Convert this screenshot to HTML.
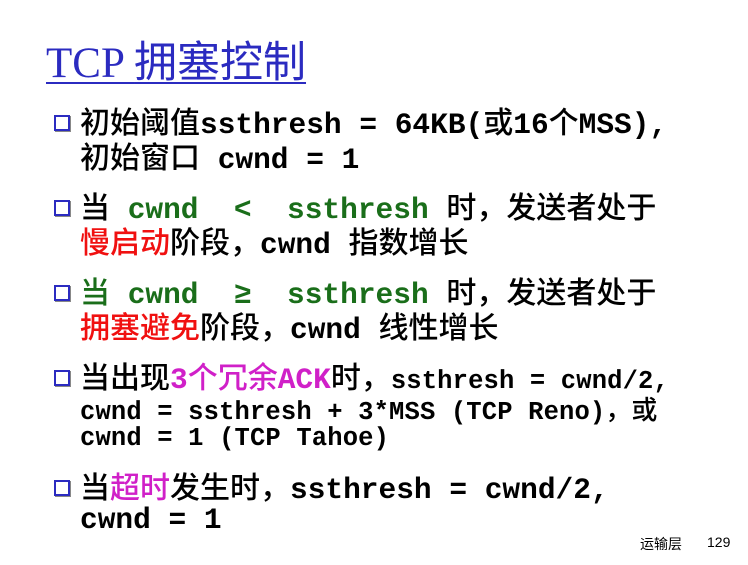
<!DOCTYPE html>
<html><head><meta charset="utf-8"><style>
html,body{margin:0;padding:0;background:#fff;}
body{width:748px;height:565px;position:relative;overflow:hidden;font-family:"Liberation Mono","Noto Sans CJK SC",monospace;font-weight:bold;color:#000;}
.t{position:absolute;left:46px;top:34px;font-family:"Liberation Serif","Noto Sans CJK SC",serif;font-weight:normal;font-size:43px;color:#2b2bc0;text-decoration:underline;text-decoration-thickness:2px;text-underline-offset:5px;white-space:pre;line-height:50px;}
.l{position:absolute;left:80px;white-space:pre;font-size:29.5px;line-height:34px;letter-spacing:0;}
.s{font-size:25.5px;letter-spacing:0.15px;}
.c{font-family:"Noto Sans CJK SC",sans-serif;font-weight:500;font-size:30px;letter-spacing:0;}
.b{position:absolute;left:54px;width:12px;height:12px;border:2px solid #2b2bc0;box-shadow:1px 1px 0 #888;}
.g{color:#1a6e1a;}.r{color:#f01010;}.m{color:#d020c8;}
.f{position:absolute;top:534px;font-family:"Liberation Sans","Noto Sans CJK SC",sans-serif;font-weight:normal;font-size:14px;}
</style></head><body>
<div class="t">TCP <span style="font-family:'Noto Sans CJK SC',sans-serif">拥塞控制</span></div>

<div class="b" style="top:115px"></div>
<div class="l" style="top:103px"><span class="c">初始阈值</span>ssthresh = 64KB(<span class="c">或</span>16<span class="c">个</span>MSS),</div>
<div class="l" style="top:138px"><span class="c">初始窗口</span> cwnd = 1</div>

<div class="b" style="top:200px"></div>
<div class="l" style="top:188px"><span class="c">当</span> <span class="g">cwnd  &lt;  ssthresh</span> <span class="c">时，发送者处于</span></div>
<div class="l" style="top:223px"><span class="c r">慢启动</span><span class="c">阶段，</span>cwnd <span class="c">指数增长</span></div>

<div class="b" style="top:285px"></div>
<div class="l" style="top:273px"><span class="c g">当</span> <span class="g">cwnd  ≥  ssthresh</span> <span class="c">时，发送者处于</span></div>
<div class="l" style="top:308px"><span class="c r">拥塞避免</span><span class="c">阶段，</span>cwnd <span class="c">线性增长</span></div>

<div class="b" style="top:370px"></div>
<div class="l" style="top:358px"><span class="c">当出现</span><span class="m">3<span class="c">个冗余</span>ACK</span><span class="c">时，</span><span class="s">ssthresh = cwnd/2,</span></div>
<div class="l s" style="top:392px">cwnd = ssthresh + 3*MSS (TCP Reno)<span class="c" style="font-size:26px">，或</span></div>
<div class="l s" style="top:422px">cwnd = 1 (TCP Tahoe)</div>

<div class="b" style="top:480px"></div>
<div class="l" style="top:468px"><span class="c">当</span><span class="c m">超时</span><span class="c">发生时，</span>ssthresh = cwnd/2,</div>
<div class="l" style="top:503px">cwnd = 1</div>

<div class="f" style="left:640px">运输层</div>
<div class="f" style="left:707px">129</div>
</body></html>
